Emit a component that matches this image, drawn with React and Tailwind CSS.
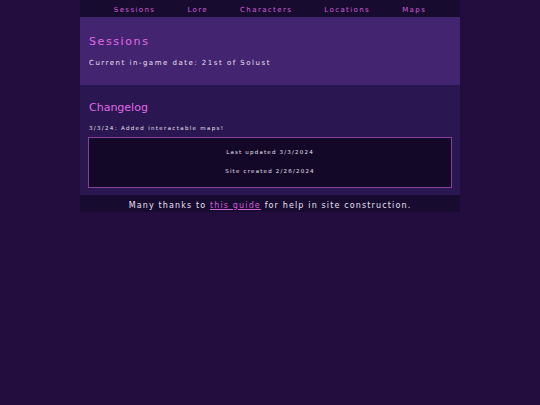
import React from 'react';

const navItems = ['Sessions', 'Lore', 'Characters', 'Locations', 'Maps'];

const App = () => {
  return (
    <div className="min-h-screen bg-[#230d3e] font-['DejaVu_Sans',sans-serif] text-[#e8e0f0]">
      <div className="mx-auto w-[380px]">
        <nav className="flex h-[17px] items-center justify-center gap-[32px] bg-[#170b30] pt-[3px] text-[7px] tracking-[1.4px] text-[#d45fd8]">
          {navItems.map((item) => (
            <span key={item}>{item}</span>
          ))}
        </nav>

        <section className="h-[68px] bg-[#432470] px-[9px] pt-[19px]">
          <h1 className="text-[11px] leading-none tracking-[1.6px] text-[#e06ae6]">Sessions</h1>
          <p className="mt-[13px] text-[7px] leading-none tracking-[1.5px]">Current in-game date: 21st of Solust</p>
        </section>

        <section className="h-[110px] bg-[#2a1650] px-[8px] pt-[17px]">
          <h2 className="px-[1px] text-[11px] leading-none text-[#e06ae6]">Changelog</h2>
          <p className="mt-[13px] px-[1px] text-[5.5px] leading-none tracking-[1.33px]">3/3/24: Added interactable maps!</p>
          <div className="mt-[5px] flex h-[51px] flex-col items-center justify-center gap-[13.5px] border border-[#8a3f9e] bg-[#140828] text-[5.5px] leading-none tracking-[1.2px]">
            <p>Last updated 3/3/2024</p>
            <p>Site created 2/26/2024</p>
          </div>
        </section>

        <footer className="flex h-[17px] items-center justify-center bg-[#170b30] pt-[4px] text-[8px] tracking-[1.14px]">
          <p>
            Many thanks to{' '}
            <a href="#" className="text-[#d45fd8] underline">this guide</a>{' '}
            for help in site construction.
          </p>
        </footer>
      </div>
    </div>
  );
};

export default App;
